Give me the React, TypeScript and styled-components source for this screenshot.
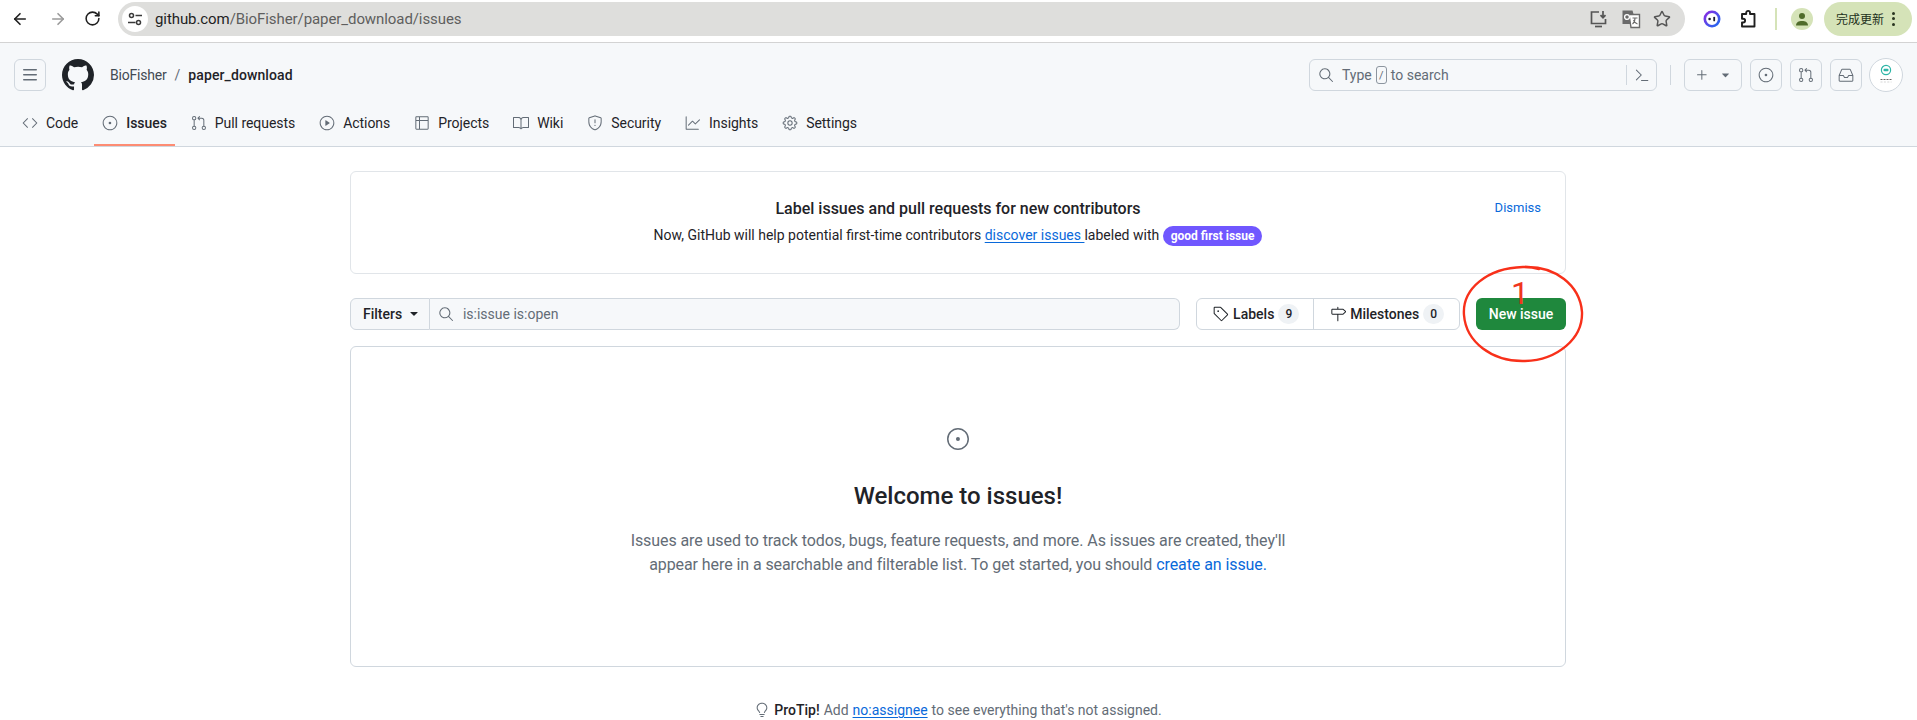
import React from 'react';
import styled, { createGlobalStyle } from 'styled-components';
import {
  GoBook,
  GoCode,
  GoCommandPalette,
  GoGear,
  GoGitPullRequest,
  GoGraph,
  GoInbox,
  GoIssueOpened,
  GoLightBulb,
  GoMilestone,
  GoPlay,
  GoPlus,
  GoSearch,
  GoShield,
  GoTable,
  GoTag,
  GoTriangleDown,
} from 'react-icons/go';
import { BsGithub } from 'react-icons/bs';
import { ArrowLeft, ArrowRight, RotateCw, Star } from 'lucide-react';

const Colors = {
  text: '#1f2328',
  muted: '#636c76',
  border: '#d0d7de',
  subtle: '#f6f8fa',
  link: '#0969da',
};

const GlobalStyle = createGlobalStyle`
  html, body {
    margin: 0;
    height: 720px;
    overflow: hidden;
    background: #fff;
  }
  body {
    font-family: Roboto, "Noto Sans", "Noto Sans CJK SC", sans-serif;
    font-size: 14px;
    color: ${Colors.text};
  }
  * { box-sizing: border-box; }
`;

const ChromeBar = styled.div`
  display: flex;
  align-items: center;
  height: 43px;
  padding: 0 5px 5px 1px;
  background: #fff;
  border-bottom: 1px solid #d3d3d3;
`;

const ChromeNavButton = styled.div<{ $w: number; $dim?: boolean }>`
  display: flex;
  align-items: center;
  justify-content: center;
  width: ${(p) => p.$w}px;
  color: ${(p) => (p.$dim ? '#9a9a9a' : '#1f1f1f')};
`;

const Omnibox = styled.div`
  display: flex;
  align-items: center;
  flex: 1;
  height: 34px;
  margin-left: 11px;
  padding: 0 14px 0 4px;
  border-radius: 17px;
  background: #dededc;
`;

const TuneBadge = styled.div`
  display: flex;
  align-items: center;
  justify-content: center;
  width: 26px;
  height: 26px;
  border-radius: 50%;
  background: #fff;
  color: #3a3a3a;
`;

const Url = styled.div`
  flex: 1;
  margin-left: 7px;
  font-size: 15px;
  letter-spacing: -0.08px;
  color: #5e5e5e;

  b {
    font-weight: 400;
    color: #1f1f1f;
  }
`;

const OmniIcons = styled.div`
  display: flex;
  align-items: center;
  gap: 12px;
  color: #555;
`;

const ChromeRight = styled.div`
  display: flex;
  align-items: center;
  margin-left: 17px;
`;

const ChromeDivider = styled.div`
  width: 2px;
  height: 22px;
  margin: 0 14px 0 1px;
  background: #d5e3b8;
`;

const ChromeAvatar = styled.div`
  display: flex;
  align-items: center;
  justify-content: center;
  width: 22px;
  height: 22px;
  margin-right: 11px;
  border-radius: 50%;
  background: #d5e3b8;
`;

const UpdatePill = styled.div`
  display: flex;
  align-items: center;
  gap: 8px;
  width: 88px;
  height: 34px;
  padding-left: 12px;
  border-radius: 17px;
  background: #d5e3b8;
  font-family: "Noto Sans CJK SC", sans-serif;
  font-size: 12px;
  color: #22301a;
`;

const KebabDots = styled.span`
  display: flex;
  flex-direction: column;
  gap: 2.5px;

  i {
    width: 3px;
    height: 3px;
    border-radius: 50%;
    background: #2a3520;
  }
`;

const Header = styled.header`
  height: 104px;
  background: ${Colors.subtle};
  border-bottom: 1px solid ${Colors.border};
`;

const HeaderTop = styled.div`
  display: flex;
  align-items: center;
  justify-content: space-between;
  height: 48px;
  padding: 16px 14px 0;
`;

const HeaderLeft = styled.div`
  display: flex;
  align-items: center;
`;

const HeaderRight = styled.div`
  display: flex;
  align-items: center;
  gap: 8px;
`;

const IconButton = styled.div`
  display: flex;
  align-items: center;
  justify-content: center;
  width: 32px;
  height: 32px;
  border: 1px solid ${Colors.border};
  border-radius: 6px;
  color: ${Colors.muted};
`;

const Logo = styled.div`
  display: flex;
  margin: 0 16px;
  color: #1f2328;
`;

const Crumbs = styled.div`
  display: flex;
  align-items: center;
  gap: 8px;

  span {
    color: ${Colors.muted};
  }
  strong {
    font-weight: 500;
    letter-spacing: 0.1px;
    color: ${Colors.text};
  }
`;

const CrumbOwner = styled.div`
  letter-spacing: -0.2px;
  color: #424a53;
`;

const GlobalSearch = styled.div`
  display: flex;
  align-items: center;
  width: 348px;
  height: 32px;
  padding-left: 8px;
  border: 1px solid ${Colors.border};
  border-radius: 6px;
  color: ${Colors.muted};
`;

const SearchHint = styled.div`
  display: flex;
  flex: 1;
  align-items: center;
  gap: 4px;
  margin-left: 8px;
`;

const Kbd = styled.span`
  display: inline-flex;
  align-items: center;
  justify-content: center;
  width: 11px;
  height: 18px;
  border: 1px solid #8c959f;
  border-radius: 3px;
  font-size: 11px;
`;

const PaletteIcon = styled.div`
  display: flex;
  align-items: center;
  justify-content: center;
  width: 30px;
  height: 20px;
  border-left: 1px solid ${Colors.border};
`;

const HeaderDivider = styled.div`
  width: 1px;
  height: 20px;
  margin: 0 5px;
  background: ${Colors.border};
`;

const PlusButton = styled(IconButton)`
  width: 58px;
  gap: 9px;
`;

const UserAvatar = styled.div`
  display: flex;
  width: 34px;
  height: 34px;
  margin-left: -1px;
  border: 1px solid ${Colors.border};
  border-radius: 50%;
  background: #fff;
`;

const RepoNav = styled.nav`
  display: flex;
  gap: 8px;
  height: 55px;
  padding: 15px 14px 0;
`;

const NavItem = styled.div<{ $active?: boolean }>`
  display: flex;
  align-items: center;
  gap: 8px;
  height: 40px;
  padding: 0 8px 4px;
  border-bottom: 2px solid ${(p) => (p.$active ? '#fd8c73' : 'transparent')};
  font-weight: ${(p) => (p.$active ? 500 : 400)};
  letter-spacing: -0.05px;

  svg {
    color: ${Colors.muted};
  }
`;

const Page = styled.main`
  width: 1216px;
  margin: 24px 0 0 350px;
`;

const Banner = styled.section`
  display: grid;
  grid-template-columns: 1fr auto 1fr;
  align-items: center;
  height: 103px;
  padding: 0 24px;
  border: 1px solid #e1e5e9;
  border-radius: 6px;
`;

const BannerBody = styled.div`
  grid-column: 2;
  display: flex;
  flex-direction: column;
  align-items: center;
  gap: 8px;
`;

const BannerTitle = styled.div`
  font-size: 16px;
  font-weight: 500;
`;

const BannerText = styled.div`
  font-size: 14px;
`;

const TextLink = styled.a`
  color: ${Colors.link};
  text-decoration: underline;
  text-underline-offset: 2px;
  white-space: pre;
`;

const Pill = styled.span`
  display: inline-block;
  padding: 0 8px;
  border-radius: 10px;
  background: #7057ff;
  color: #fff;
  font-size: 12px;
  font-weight: 700;
  line-height: 20px;
`;

const Dismiss = styled.a`
  grid-column: 3;
  justify-self: end;
  align-self: start;
  margin-top: 28px;
  font-size: 13px;
  color: ${Colors.link};
`;

const Toolbar = styled.div`
  position: relative;
  display: flex;
  height: 32px;
  margin-top: 24px;
`;

const FiltersButton = styled.div`
  display: flex;
  align-items: center;
  gap: 5px;
  width: 80px;
  padding-left: 12px;
  border: 1px solid ${Colors.border};
  border-radius: 6px 0 0 6px;
  background: ${Colors.subtle};
  font-weight: 500;
  color: ${Colors.text};
`;

const FilterInput = styled.div`
  display: flex;
  align-items: center;
  gap: 9px;
  width: 751px;
  padding-left: 8px;
  border: 1px solid ${Colors.border};
  border-left: 0;
  border-radius: 0 6px 6px 0;
  background: ${Colors.subtle};
  color: ${Colors.muted};
`;

const LinkGroup = styled.div`
  display: flex;
  width: 264px;
  margin-left: 16px;
  border: 1px solid ${Colors.border};
  border-radius: 6px;
`;

const LinkTab = styled.div<{ $w: number }>`
  display: flex;
  align-items: center;
  gap: 4px;
  width: ${(p) => p.$w}px;
  padding-left: 16px;
  font-weight: 500;

  & + & {
    border-left: 1px solid ${Colors.border};
  }
`;

const Counter = styled.span`
  display: inline-flex;
  align-items: center;
  justify-content: center;
  min-width: 21px;
  height: 20px;
  border-radius: 10px;
  background: #eff2f5;
  font-size: 12px;
  font-weight: 500;
`;

const NewIssue = styled.div`
  display: flex;
  align-items: center;
  justify-content: center;
  width: 90px;
  margin-left: 16px;
  border-radius: 6px;
  background: #1f883d;
  color: #fff;
  font-weight: 500;
`;

const CircleMark = styled.svg`
  position: absolute;
  top: -34px;
  right: -19px;
  pointer-events: none;
`;

const CircleNumber = styled.span`
  position: absolute;
  top: -21px;
  right: 37px;
  font-size: 32px;
  font-weight: 400;
  line-height: 1;
  color: #f0351e;
`;

const EmptyBox = styled.section`
  display: flex;
  flex-direction: column;
  align-items: center;
  height: 321px;
  margin-top: 16px;
  padding-top: 80px;
  border: 1px solid ${Colors.border};
  border-radius: 6px;
  color: ${Colors.muted};
`;

const EmptyTitle = styled.h2`
  margin: 29px 0 0;
  font-size: 24px;
  font-weight: 500;
  line-height: 32px;
  color: ${Colors.text};
`;

const EmptyText = styled.p`
  max-width: 680px;
  margin: 17px 0 0;
  font-size: 16px;
  letter-spacing: -0.08px;
  line-height: 24px;
  text-align: center;
`;

const PlainLink = styled.a`
  color: ${Colors.link};
`;

const ProTip = styled.div`
  display: flex;
  align-items: center;
  justify-content: center;
  gap: 4px;
  margin-top: 35px;
  color: ${Colors.muted};

  strong {
    font-weight: 500;
    color: ${Colors.text};
  }
`;

const MenuIcon = () => (
  <svg width="16" height="16" viewBox="0 0 16 16" fill="currentColor">
    <path d="M1 2.75A.75.75 0 0 1 1.75 2h12.5a.75.75 0 0 1 0 1.5H1.75A.75.75 0 0 1 1 2.75Zm0 5A.75.75 0 0 1 1.75 7h12.5a.75.75 0 0 1 0 1.5H1.75A.75.75 0 0 1 1 7.75ZM1.75 12h12.5a.75.75 0 0 1 0 1.5H1.75a.75.75 0 0 1 0-1.5Z" />
  </svg>
);

const TuneIcon = () => (
  <svg width="16" height="16" viewBox="0 0 16 16" fill="none" stroke="currentColor" strokeWidth="1.5">
    <circle cx="4.5" cy="4.5" r="2" />
    <path d="M8.5 4.5H15M1 11.5h7.5" />
    <circle cx="11.5" cy="11.5" r="2" />
  </svg>
);

const InstallIcon = () => (
  <svg width="20" height="20" viewBox="0 0 20 20" fill="none" stroke="currentColor" strokeWidth="1.7">
    <path d="M10 3H2.5v11.5h14V10" />
    <path d="M6 17.5h7" />
    <path d="M14 2v6.5M11.5 6.2 14 8.7l2.5-2.5" />
  </svg>
);

const TranslateIcon = () => (
  <svg width="20" height="20" viewBox="0 0 20 20">
    <path d="M1.5 1.5h10l1 3.5h-3l1 10H1.5z" fill="#6a6a6a" />
    <path d="M8 5.5h10.5v13H10z" fill="#fff" stroke="#6a6a6a" strokeWidth="1.4" />
    <circle cx="6" cy="8" r="2.4" fill="none" stroke="#fff" strokeWidth="1.3" />
    <path d="M11.5 9h5M14 9c0 3-1.2 5-2.5 6M12.5 11c.8 2 2.5 3.5 4 4" fill="none" stroke="#6a6a6a" strokeWidth="1.1" />
  </svg>
);

const CopilotIcon = () => (
  <svg width="20" height="20" viewBox="0 0 20 20">
    <defs>
      <linearGradient id="ring" x1="0" y1="0" x2="1" y2="1">
        <stop offset="0" stopColor="#8a2be2" />
        <stop offset="1" stopColor="#1e6bf0" />
      </linearGradient>
    </defs>
    <circle cx="10" cy="10" r="7.2" fill="#fff" stroke="url(#ring)" strokeWidth="2.6" />
    <circle cx="7.6" cy="10" r="1.3" fill="#1b1b2e" />
    <path d="M12.2 8.6v2.8" stroke="#1b1b2e" strokeWidth="1.8" strokeLinecap="round" />
  </svg>
);

const ExtensionIcon = () => (
  <svg width="20" height="20" viewBox="0 0 20 20" fill="none" stroke="#1f1f1f" strokeWidth="1.9" strokeLinejoin="round">
    <path d="M4 17.5v-4h1.2a1.9 1.9 0 0 0 0-3.8H4V5h4.2V3.8a1.9 1.9 0 0 1 3.8 0V5h4.5v12.5z" />
  </svg>
);

const PersonIcon = () => (
  <svg width="14" height="14" viewBox="0 0 14 14" fill="#4f6b2a">
    <circle cx="7" cy="4" r="3" />
    <path d="M1 13.5c0-3.2 2.6-4.6 6-4.6s6 1.4 6 4.6z" />
  </svg>
);

const AvatarMark = () => (
  <svg width="32" height="32" viewBox="0 0 32 32" fill="none">
    <circle cx="16" cy="11" r="4.6" stroke="#2cb5a6" strokeWidth="1.2" />
    <rect x="13.5" y="9.8" width="5" height="2.4" rx="1" fill="#2cb5a6" />
    <path d="M10.5 20.5h11" stroke="#666" strokeWidth="1.1" strokeDasharray="2 1" />
    <path d="M10.5 23h11" stroke="#c4c4c4" strokeWidth="0.7" strokeDasharray="2 1.4" />
  </svg>
);

const navItems = [
  { label: 'Code', icon: <GoCode size={16} /> },
  { label: 'Issues', icon: <GoIssueOpened size={16} />, active: true },
  { label: 'Pull requests', icon: <GoGitPullRequest size={16} /> },
  { label: 'Actions', icon: <GoPlay size={16} /> },
  { label: 'Projects', icon: <GoTable size={16} /> },
  { label: 'Wiki', icon: <GoBook size={16} /> },
  { label: 'Security', icon: <GoShield size={16} /> },
  { label: 'Insights', icon: <GoGraph size={16} /> },
  { label: 'Settings', icon: <GoGear size={16} /> },
];

export default function App() {
  return (
    <>
      <GlobalStyle />
      <ChromeBar>
        <ChromeNavButton $w={38}>
          <ArrowLeft size={18} strokeWidth={2.2} />
        </ChromeNavButton>
        <ChromeNavButton $w={38} $dim>
          <ArrowRight size={18} strokeWidth={2.2} />
        </ChromeNavButton>
        <ChromeNavButton $w={30}>
          <RotateCw size={17} strokeWidth={2.2} />
        </ChromeNavButton>
        <Omnibox>
          <TuneBadge>
            <TuneIcon />
          </TuneBadge>
          <Url>
            <b>github.com</b>/BioFisher/paper_download/issues
          </Url>
          <OmniIcons>
            <InstallIcon />
            <TranslateIcon />
            <Star size={18} strokeWidth={2} />
          </OmniIcons>
        </Omnibox>
        <ChromeRight>
          <CopilotIcon />
          <ChromeNavButton $w={52}>
            <ExtensionIcon />
          </ChromeNavButton>
          <ChromeDivider />
          <ChromeAvatar>
            <PersonIcon />
          </ChromeAvatar>
          <UpdatePill>
            完成更新
            <KebabDots>
              <i />
              <i />
              <i />
            </KebabDots>
          </UpdatePill>
        </ChromeRight>
      </ChromeBar>

      <Header>
        <HeaderTop>
          <HeaderLeft>
            <IconButton>
              <MenuIcon />
            </IconButton>
            <Logo>
              <BsGithub size={32} />
            </Logo>
            <Crumbs>
              <CrumbOwner>BioFisher</CrumbOwner>
              <span>/</span>
              <strong>paper_download</strong>
            </Crumbs>
          </HeaderLeft>
          <HeaderRight>
            <GlobalSearch>
              <GoSearch size={16} />
              <SearchHint>
                Type <Kbd>/</Kbd> to search
              </SearchHint>
              <PaletteIcon>
                <GoCommandPalette size={16} />
              </PaletteIcon>
            </GlobalSearch>
            <HeaderDivider />
            <PlusButton>
              <GoPlus size={16} />
              <GoTriangleDown size={13} />
            </PlusButton>
            <IconButton>
              <GoIssueOpened size={16} />
            </IconButton>
            <IconButton>
              <GoGitPullRequest size={16} />
            </IconButton>
            <IconButton>
              <GoInbox size={16} />
            </IconButton>
            <UserAvatar>
              <AvatarMark />
            </UserAvatar>
          </HeaderRight>
        </HeaderTop>
        <RepoNav>
          {navItems.map((item) => (
            <NavItem key={item.label} $active={item.active}>
              {item.icon}
              {item.label}
            </NavItem>
          ))}
        </RepoNav>
      </Header>

      <Page>
        <Banner>
          <BannerBody>
            <BannerTitle>Label issues and pull requests for new contributors</BannerTitle>
            <BannerText>
              Now, GitHub will help potential first-time contributors <TextLink>discover issues </TextLink>labeled with{' '}
              <Pill>good first issue</Pill>
            </BannerText>
          </BannerBody>
          <Dismiss>Dismiss</Dismiss>
        </Banner>

        <Toolbar>
          <FiltersButton>
            Filters
            <GoTriangleDown size={14} />
          </FiltersButton>
          <FilterInput>
            <GoSearch size={16} />
            is:issue is:open
          </FilterInput>
          <LinkGroup>
            <LinkTab $w={117}>
              <GoTag size={16} />
              Labels <Counter>9</Counter>
            </LinkTab>
            <LinkTab $w={147}>
              <GoMilestone size={16} />
              Milestones <Counter>0</Counter>
            </LinkTab>
          </LinkGroup>
          <NewIssue>New issue</NewIssue>
          <CircleMark width="124" height="100" viewBox="0 0 124 100" fill="none">
            <path
              d="M64 3C94 2 119 21 121 48c1 26-24 48-57 49C31 98 5 78 3 51 1 25 26 4 62 3c6 0 11 .5 16 2"
              stroke="#f8301a"
              strokeWidth="2.4"
              strokeLinecap="round"
            />
          </CircleMark>
          <CircleNumber>1</CircleNumber>
        </Toolbar>

        <EmptyBox>
          <GoIssueOpened size={24} />
          <EmptyTitle>Welcome to issues!</EmptyTitle>
          <EmptyText>
            Issues are used to track todos, bugs, feature requests, and more. As issues are created, they'll appear here
            in a searchable and filterable list. To get started, you should <PlainLink>create an issue.</PlainLink>
          </EmptyText>
        </EmptyBox>

        <ProTip>
          <GoLightBulb size={16} />
          <strong>ProTip!</strong> Add <TextLink>no:assignee</TextLink> to see everything that's not assigned.
        </ProTip>
      </Page>
    </>
  );
}
